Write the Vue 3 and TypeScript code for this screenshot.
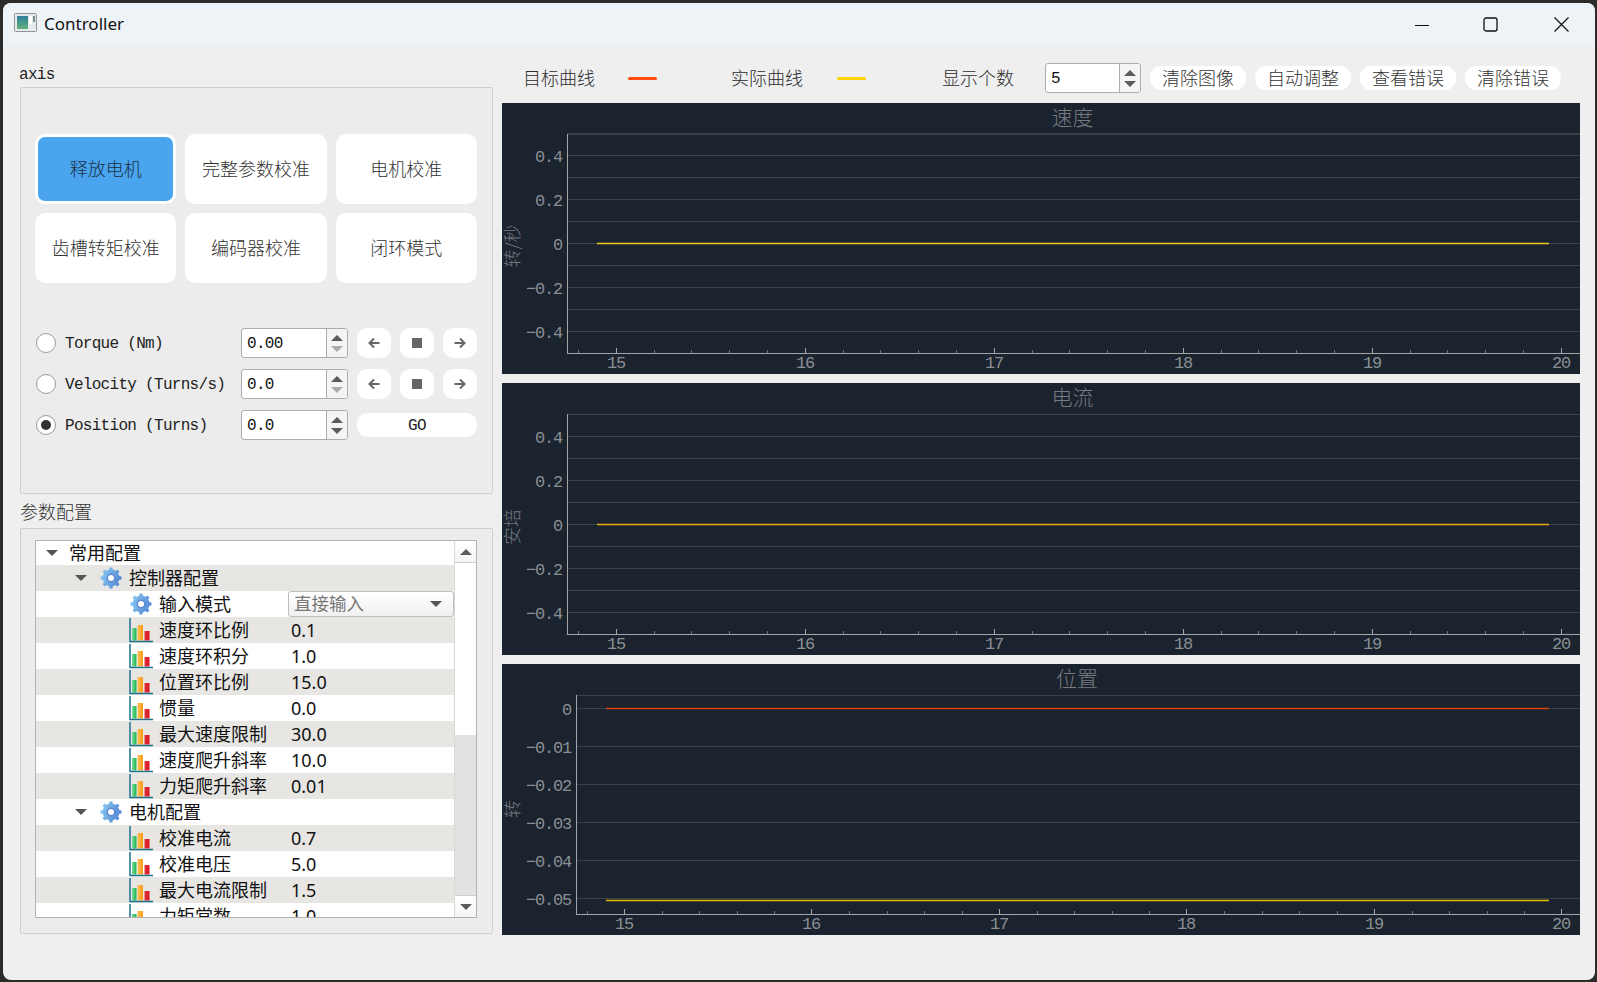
<script setup lang="ts">
interface TreeRow {
  name: string;
  depth: 0 | 1 | 2;
  kind: 'section' | 'combo' | 'value';
  value?: string;
}

interface ChartLine {
  y: number;
  color: string;
}

interface ChartDef {
  title: string;
  unit: string;
  height: number;
  axisX: number;
  axisBottom: number;
  unitY: number;
  firstMajor: number;
  majorStep: number;
  firstMinor: number;
  dataStart: number;
  grid: number[];
  labels: { y: number; text: string }[];
  lines: ChartLine[];
}

const actions = ['释放电机', '完整参数校准', '电机校准', '齿槽转矩校准', '编码器校准', '闭环模式'];
const toolButtons = ['清除图像', '自动调整', '查看错误', '清除错误'];

const modes = [
  { label: 'Torque (Nm)', value: '0.00', checked: false, hasGo: false },
  { label: 'Velocity (Turns/s)', value: '0.0', checked: false, hasGo: false },
  { label: 'Position (Turns)', value: '0.0', checked: true, hasGo: true },
];

const treeRows: TreeRow[] = [
  { name: '常用配置', depth: 0, kind: 'section' },
  { name: '控制器配置', depth: 1, kind: 'section' },
  { name: '输入模式', depth: 2, kind: 'combo', value: '直接输入' },
  { name: '速度环比例', depth: 2, kind: 'value', value: '0.1' },
  { name: '速度环积分', depth: 2, kind: 'value', value: '1.0' },
  { name: '位置环比例', depth: 2, kind: 'value', value: '15.0' },
  { name: '惯量', depth: 2, kind: 'value', value: '0.0' },
  { name: '最大速度限制', depth: 2, kind: 'value', value: '30.0' },
  { name: '速度爬升斜率', depth: 2, kind: 'value', value: '10.0' },
  { name: '力矩爬升斜率', depth: 2, kind: 'value', value: '0.01' },
  { name: '电机配置', depth: 1, kind: 'section' },
  { name: '校准电流', depth: 2, kind: 'value', value: '0.7' },
  { name: '校准电压', depth: 2, kind: 'value', value: '5.0' },
  { name: '最大电流限制', depth: 2, kind: 'value', value: '1.5' },
  { name: '力矩常数', depth: 2, kind: 'value', value: '1.0' },
];

function gearPath(): string {
  const points: string[] = [];
  const teeth = 8;
  for (let i = 0; i < teeth; i++) {
    const a = (i / teeth) * Math.PI * 2;
    const w = Math.PI / teeth;
    const corners: [number, number][] = [
      [8, a - w * 0.62],
      [10.6, a - w * 0.36],
      [10.6, a + w * 0.36],
      [8, a + w * 0.62],
    ];
    corners.forEach(([r, t]) => {
      points.push(`${(11 + r * Math.cos(t)).toFixed(2)} ${(11 + r * Math.sin(t)).toFixed(2)}`);
    });
  }
  return `M${points.join('L')}Z`;
}

const gear = gearPath();

function valueGrid(zero: number) {
  const grid: number[] = [];
  for (let i = -5; i <= 4; i++) grid.push(zero + i * 22);
  const labels = [
    { y: zero - 88, text: '0.4' },
    { y: zero - 44, text: '0.2' },
    { y: zero, text: '0' },
    { y: zero + 44, text: '−0.2' },
    { y: zero + 88, text: '−0.4' },
  ];
  return { grid, labels };
}

const charts: ChartDef[] = [
  {
    title: '速度',
    unit: '转/秒',
    height: 271,
    axisX: 65,
    axisBottom: 250,
    unitY: 143,
    firstMajor: 114,
    majorStep: 189,
    firstMinor: 76,
    dataStart: 95,
    ...valueGrid(140),
    lines: [{ y: 140, color: '#f0cc1c' }],
  },
  {
    title: '电流',
    unit: '安培',
    height: 272,
    axisX: 65,
    axisBottom: 251,
    unitY: 144,
    firstMajor: 114,
    majorStep: 189,
    firstMinor: 76,
    dataStart: 95,
    ...valueGrid(141),
    lines: [{ y: 141, color: '#eda714' }],
  },
  {
    title: '位置',
    unit: '转',
    height: 271,
    axisX: 74,
    axisBottom: 250,
    unitY: 145,
    firstMajor: 122,
    majorStep: 187.4,
    firstMinor: 85,
    dataStart: 104,
    grid: [44, 82, 120, 158, 196, 234],
    labels: [
      { y: 44, text: '0' },
      { y: 82, text: '−0.01' },
      { y: 120, text: '−0.02' },
      { y: 158, text: '−0.03' },
      { y: 196, text: '−0.04' },
      { y: 234, text: '−0.05' },
    ],
    lines: [
      { y: 44, color: '#d8450f' },
      { y: 236, color: '#e8bb00' },
    ],
  },
];

function majorTicks(c: ChartDef) {
  return [0, 1, 2, 3, 4, 5].map((i) => ({ x: Math.round(c.firstMajor + i * c.majorStep), text: String(15 + i) }));
}

function minorTicks(c: ChartDef) {
  const step = c.majorStep / 5;
  const list: number[] = [];
  for (let i = 0; i < 26; i++) {
    if (i % 5 !== 1) list.push(Math.round(c.firstMinor + i * step));
  }
  return list;
}
</script>

<template>
  <div class="window">
    <header class="titlebar">
      <svg class="app-icon" width="23" height="19" viewBox="0 0 23 19">
        <defs>
          <linearGradient id="appFill" x1="0" y1="0" x2="0" y2="1">
            <stop offset="0" stop-color="#2f7f9a" />
            <stop offset="1" stop-color="#63b27a" />
          </linearGradient>
        </defs>
        <rect x="0.5" y="0.5" width="22" height="18" rx="1" fill="#e6eaed" stroke="#8f9498" />
        <rect x="3" y="3" width="11" height="13" fill="url(#appFill)" />
        <rect x="15" y="3" width="3" height="8" fill="#fff" />
        <rect x="19" y="3" width="2" height="6" fill="#6f8f88" />
      </svg>
      <span class="app-name">Controller</span>
      <div class="window-controls">
        <svg width="14" height="14" viewBox="0 0 14 14"><path d="M0 7.5H14" stroke="#111" stroke-width="1.2" /></svg>
        <svg width="15" height="15" viewBox="0 0 15 15"><rect x="1" y="1" width="13" height="13" rx="2" fill="none" stroke="#111" stroke-width="1.3" /></svg>
        <svg width="15" height="15" viewBox="0 0 15 15"><path d="M.5 .5L14.5 14.5M14.5 .5L.5 14.5" stroke="#111" stroke-width="1.2" /></svg>
      </div>
    </header>

    <main class="body">
      <section class="left">
        <div class="group-title mono first">axis</div>
        <div class="group group-axis">
          <div class="actions">
            <button v-for="(a, i) in actions" :key="a" class="action" :class="{ active: i === 0 }">
              <span>{{ a }}</span>
            </button>
          </div>
          <div class="modes">
            <div v-for="m in modes" :key="m.label" class="mode">
              <span class="radio" :class="{ checked: m.checked }"></span>
              <span class="mode-label mono">{{ m.label }}</span>
              <div class="spin">
                <span class="spin-text mono">{{ m.value }}</span>
                <span class="spin-arrows">
                  <i class="tri up"></i>
                  <i class="tri down" :class="{ disabled: !m.checked }"></i>
                </span>
              </div>
              <button v-if="m.hasGo" class="go mono">GO</button>
              <div v-else class="jog">
                <button class="jog-btn">
                  <svg width="12" height="12" viewBox="0 0 12 12"><path d="M11.5 6H1.5M6 1.5L1.5 6L6 10.5" fill="none" stroke="#666" stroke-width="2" /></svg>
                </button>
                <button class="jog-btn"><i class="stop"></i></button>
                <button class="jog-btn">
                  <svg width="12" height="12" viewBox="0 0 12 12"><path d="M.5 6H10.5M6 1.5L10.5 6L6 10.5" fill="none" stroke="#666" stroke-width="2" /></svg>
                </button>
              </div>
            </div>
          </div>
        </div>

        <div class="group-title cjk second">参数配置</div>
        <div class="group group-tree">
          <div class="tree">
            <div class="rows">
              <div v-for="(r, i) in treeRows" :key="r.name" class="row" :class="{ odd: i % 2 === 1 }">
                <div class="row-name" :class="`depth-${r.depth}`">
                  <i v-if="r.kind === 'section'" class="caret"></i>
                  <svg v-if="r.kind !== 'value' && r.depth > 0" class="gear" width="22" height="22" viewBox="0 0 22 22">
                    <defs>
                      <linearGradient id="gearFill" x1="0" y1="0" x2="1" y2="0.4">
                        <stop offset="0" stop-color="#8fd0f3" />
                        <stop offset="1" stop-color="#558bd6" />
                      </linearGradient>
                    </defs>
                    <circle cx="11" cy="11" r="8.4" fill="url(#gearFill)" />
                    <path :d="gear" fill="url(#gearFill)" />
                    <circle cx="11" cy="11" r="4.4" fill="#5a86d2" />
                    <circle cx="11" cy="11" r="3" fill="#fff" />
                  </svg>
                  <svg v-if="r.kind === 'value'" class="bars" width="24" height="25" viewBox="0 0 24 25">
                    <defs>
                      <linearGradient id="barGreen" x1="0" y1="0" x2="1" y2="0">
                        <stop offset="0" stop-color="#7fdc94" />
                        <stop offset="1" stop-color="#16b356" />
                      </linearGradient>
                      <linearGradient id="barOrange" x1="0" y1="0" x2="1" y2="0">
                        <stop offset="0" stop-color="#fdc060" />
                        <stop offset="1" stop-color="#f79a12" />
                      </linearGradient>
                      <linearGradient id="barRed" x1="0" y1="0" x2="1" y2="0">
                        <stop offset="0" stop-color="#e0323c" />
                        <stop offset="1" stop-color="#d9141f" />
                      </linearGradient>
                    </defs>
                    <rect x="3" y="10" width="4.5" height="12.5" fill="url(#barGreen)" />
                    <rect x="8.5" y="7" width="5.5" height="15.5" fill="url(#barOrange)" />
                    <rect x="15.5" y="13" width="5" height="9.5" fill="url(#barRed)" />
                    <path d="M1 0V23.5H24" fill="none" stroke="#1f6f8d" stroke-width="1.5" />
                  </svg>
                  <span class="row-text">{{ r.name }}</span>
                </div>
                <div v-if="r.kind === 'combo'" class="combo">
                  <span class="row-text">{{ r.value }}</span>
                  <i class="caret small"></i>
                </div>
                <span v-else-if="r.kind === 'value'" class="row-value">{{ r.value }}</span>
              </div>
            </div>
            <div class="scrollbar">
              <div class="sb-btn"><i class="tri up"></i></div>
              <div class="sb-thumb"></div>
              <div class="sb-track"></div>
              <div class="sb-btn bottom"><i class="tri down"></i></div>
            </div>
          </div>
        </div>
      </section>

      <section class="right">
        <div class="toolbar">
          <div class="legend">
            <span class="cjk label">目标曲线</span>
            <i class="swatch target"></i>
          </div>
          <div class="legend second-legend">
            <span class="cjk label">实际曲线</span>
            <i class="swatch actual"></i>
          </div>
          <span class="cjk label count-label">显示个数</span>
          <div class="spin count">
            <span class="spin-text mono">5</span>
            <span class="spin-arrows">
              <i class="tri up"></i>
              <i class="tri down"></i>
            </span>
          </div>
          <button v-for="b in toolButtons" :key="b" class="tool cjk"><span>{{ b }}</span></button>
        </div>

        <div class="charts">
          <div v-for="c in charts" :key="c.title" class="chart">
            <svg class="plot" width="1078" :height="c.height" :viewBox="`0 0 1078 ${c.height}`">
              <text class="plot-title" :x="(c.axisX + 1078) / 2 - 1" y="13">{{ c.title }}</text>
              <text class="plot-unit" :transform="`translate(9 ${c.unitY}) rotate(-90)`">{{ c.unit }}</text>
              <line class="grid" :x1="c.axisX" :x2="1078" y1="31.5" y2="31.5" />
              <line v-for="y in c.grid" :key="y" class="grid" :x1="c.axisX" :x2="1078" :y1="y + 0.5" :y2="y + 0.5" />
              <line class="axis" :x1="c.axisX + 0.5" :x2="c.axisX + 0.5" y1="31" :y2="c.axisBottom" />
              <line class="axis" :x1="c.axisX" :x2="1078" :y1="c.axisBottom + 0.5" :y2="c.axisBottom + 0.5" />
              <line v-for="x in minorTicks(c)" :key="x" class="tick" :x1="x + 0.5" :x2="x + 0.5" :y1="c.axisBottom - 3" :y2="c.axisBottom" />
              <template v-for="t in majorTicks(c)" :key="t.x">
                <line class="axis" :x1="t.x + 0.5" :x2="t.x + 0.5" :y1="c.axisBottom - 5" :y2="c.axisBottom" />
                <text class="x-label" :x="t.x" :y="c.axisBottom + 10">{{ t.text }}</text>
              </template>
              <text v-for="l in c.labels" :key="l.text" class="y-label" :x="c.axisX - 5" :y="l.y + 2">{{ l.text }}</text>
              <line v-for="l in c.lines" :key="l.y" :x1="c.dataStart" x2="1047" :y1="l.y + 0.5" :y2="l.y + 0.5" :stroke="l.color" stroke-width="1.5" />
            </svg>
          </div>
        </div>
      </section>
    </main>
  </div>
</template>

<style>
html,
body {
  margin: 0;
  background: #2b2b2b;
  overflow: hidden;
}
</style>

<style scoped>
.window {
  box-sizing: border-box;
  width: 1592px;
  height: 977px;
  margin: 3px 0 0 3px;
  background: #efefef;
  border-radius: 8px;
  overflow: hidden;
  font-family: "Noto Sans CJK SC", sans-serif;
}

.mono {
  font-family: "Liberation Mono", "Noto Sans CJK SC", monospace;
  font-size: 16px;
  letter-spacing: -0.7px;
}

.cjk {
  font-family: "Noto Sans CJK SC", sans-serif;
  font-size: 18px;
  font-weight: 300;
}

button {
  border: 0;
  padding: 0;
  background: #fff;
  color: #222;
}

.titlebar {
  display: flex;
  align-items: center;
  height: 43px;
  padding: 0 26px 0 11px;
  background: #eef3f8;
}

.app-icon {
  margin-top: -4px;
}

.app-name {
  margin: 0 0 3px 7px;
  font-family: "Noto Sans", sans-serif;
  font-size: 17px;
  color: #111;
}

.window-controls {
  display: flex;
  align-items: center;
  margin-left: auto;
  gap: 54px;
}

.window-controls svg:last-child {
  margin-left: 2px;
}

.body {
  display: flex;
  gap: 9px;
  padding-left: 17px;
}

.left {
  width: 473px;
}

.group-title {
  color: #222;
  height: 20px;
  line-height: 20px;
}

.group-title.first {
  padding-top: 19px;
  margin: 0 0 2px -1px;
}

.group-title.second {
  margin: 7px 0 7px;
  color: #333;
}

.group {
  box-sizing: border-box;
  border: 1px solid #cfcfcf;
  border-radius: 2px;
  background: #ececec;
}

.group-axis {
  height: 407px;
  padding: 46px 15px 0 14px;
}

.group-tree {
  height: 406px;
  padding: 11px 15px 0 14px;
}

.actions {
  display: grid;
  grid-template-columns: repeat(3, 1fr);
  grid-auto-rows: 70px;
  gap: 9px;
}

.action {
  border-radius: 10px;
  font-family: "Noto Sans CJK SC", sans-serif;
  font-size: 18px;
  font-weight: 300;
  color: #333;
}

.action span {
  display: block;
  padding-bottom: 2px;
}

.action.active {
  border: 3px solid #fff;
  background: #4aa5ee;
  color: #1c3147;
}

.modes {
  display: flex;
  flex-direction: column;
  gap: 11px;
  margin-top: 45px;
}

.mode {
  display: flex;
  align-items: center;
  height: 30px;
}

.radio {
  box-sizing: border-box;
  flex: none;
  display: grid;
  place-items: center;
  width: 20px;
  height: 20px;
  margin-left: 1px;
  border: 1px solid #9b9b9b;
  border-radius: 50%;
  background: #fff;
}

.radio.checked::after {
  content: "";
  width: 10px;
  height: 10px;
  border-radius: 50%;
  background: #333;
}

.mode-label {
  flex: none;
  width: 176px;
  margin-left: 9px;
  padding-top: 2px;
  color: #222;
  white-space: pre;
}

.spin {
  box-sizing: border-box;
  flex: none;
  display: flex;
  width: 107px;
  height: 30px;
  border: 1px solid #adadad;
  border-radius: 3px;
  background: #fff;
  overflow: hidden;
}

.spin-text {
  flex: 1;
  padding-left: 5px;
  line-height: 28px;
  padding-top: 1px;
  color: #111;
}

.spin-arrows {
  box-sizing: border-box;
  display: flex;
  flex-direction: column;
  align-items: center;
  justify-content: center;
  gap: 5px;
  width: 21px;
  border-left: 1px solid #adadad;
  background: #f4f4f4;
}

.tri {
  display: block;
  width: 0;
  height: 0;
  border-left: 6px solid transparent;
  border-right: 6px solid transparent;
}

.tri.up {
  border-bottom: 6px solid #5c5c5c;
}

.tri.down {
  border-top: 6px solid #5c5c5c;
}

.tri.down.disabled {
  border-top-color: #ababab;
}

.jog {
  display: flex;
  gap: 9px;
  margin-left: 9px;
}

.jog-btn {
  display: grid;
  place-items: center;
  width: 34px;
  height: 30px;
  border-radius: 10px;
}

.stop {
  display: block;
  width: 10px;
  height: 10px;
  background: #666;
}

.go {
  width: 120px;
  height: 24px;
  margin-left: 9px;
  padding-top: 2px;
  border-radius: 11px;
  color: #222;
}

.tree {
  box-sizing: border-box;
  display: flex;
  height: 378px;
  border: 1px solid #b2b2b2;
  background: #fff;
}

.rows {
  flex: 1;
  min-width: 0;
  overflow: hidden;
}

.row {
  display: flex;
  align-items: center;
  height: 26px;
}

.row:first-child {
  height: 24px;
}

.row.odd {
  background: #e7e6e3;
}

.row-name {
  box-sizing: border-box;
  flex: none;
  display: flex;
  align-items: center;
  width: 252px;
  font-size: 18px;
  color: #111;
}

.row-text {
  margin-bottom: 2px;
  line-height: 22px;
}

.depth-0 {
  padding-left: 10px;
}

.depth-1 {
  padding-left: 39px;
}

.depth-2 {
  padding-left: 93px;
}

.caret {
  display: block;
  flex: none;
  width: 0;
  height: 0;
  border-left: 6px solid transparent;
  border-right: 6px solid transparent;
  border-top: 6px solid #555;
}

.caret.small {
  margin-left: auto;
}

.depth-0 .caret {
  margin-right: 11px;
}

.depth-1 .caret {
  margin-right: 13px;
}

.gear {
  flex: none;
  margin-right: 7px;
}

.depth-2 .gear {
  margin-left: 1px;
  margin-right: 7px;
}

.bars {
  flex: none;
  margin-right: 6px;
}

.row-value {
  padding-left: 3px;
  font-family: "Noto Sans", sans-serif;
  font-size: 18px;
  color: #111;
}

.combo {
  box-sizing: border-box;
  display: flex;
  align-items: center;
  width: 167px;
  height: 26px;
  padding: 0 11px 0 5px;
  border: 1px solid #bdbdbd;
  border-radius: 3px;
  background: linear-gradient(#fff, #f0f0f0);
  font-size: 17.5px;
  color: #777;
}

.scrollbar {
  flex: none;
  display: flex;
  flex-direction: column;
  width: 21px;
  border-left: 1px solid #d8d8d8;
}

.sb-btn {
  display: grid;
  place-items: center;
  height: 21px;
  background: linear-gradient(#fff, #f4f4f4);
  border-bottom: 1px solid #cfcfcf;
}

.sb-btn.bottom {
  border-bottom: 0;
  border-top: 1px solid #cfcfcf;
}

.sb-thumb {
  height: 172px;
  background: #fff;
}

.sb-track {
  flex: 1;
  background: #e2e2e2;
}

.right {
  width: 1078px;
}

.toolbar {
  display: flex;
  align-items: center;
  height: 30px;
  padding: 17px 0 10px 21px;
  color: #2b2b2b;
}

.label {
  margin-bottom: 2px;
}

.legend {
  display: flex;
  align-items: center;
  gap: 33px;
  margin-right: 74px;
}

.second-legend {
  gap: 34px;
  margin-right: 76px;
}

.swatch {
  display: block;
  width: 29px;
  height: 3px;
  border-radius: 2px;
}

.swatch.target {
  background: #ff4d0d;
}

.swatch.actual {
  background: #ffd400;
}

.count-label {
  margin-right: 31px;
}

.spin.count {
  width: 96px;
  margin-right: 9px;
}

.tool {
  width: 96px;
  height: 24px;
  margin-right: 9px;
  border-radius: 11px;
  color: #333;
}

.tool span {
  display: block;
  line-height: 22px;
  padding-bottom: 2px;
}

.charts {
  display: flex;
  flex-direction: column;
  gap: 9px;
}

.chart {
  background: #1a232e;
}

.plot {
  display: block;
}

.plot text {
  dominant-baseline: central;
}

.plot-title {
  font-family: "Noto Sans CJK SC", sans-serif;
  font-size: 21px;
  font-weight: 300;
  fill: #777b80;
  text-anchor: middle;
}

.plot-unit {
  font-family: "Noto Sans CJK SC", sans-serif;
  font-size: 18px;
  font-weight: 300;
  fill: #74787d;
  text-anchor: middle;
}

.grid {
  stroke: #3a4149;
  stroke-width: 1;
}

.axis {
  stroke: #a3a5a8;
  stroke-width: 1;
}

.tick {
  stroke: #6f7378;
  stroke-width: 1;
}

.x-label,
.y-label {
  font-family: "Liberation Mono", monospace;
  font-size: 17px;
  letter-spacing: -1.2px;
  fill: #8b8f94;
}

.x-label {
  text-anchor: middle;
}

.y-label {
  text-anchor: end;
}
</style>
